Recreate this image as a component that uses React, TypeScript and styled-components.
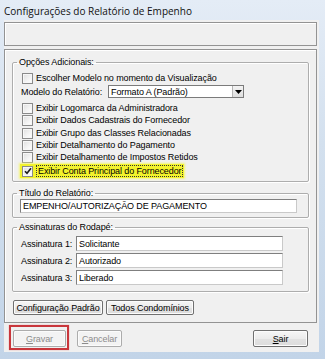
import * as React from 'react'
import styled, { createGlobalStyle } from 'styled-components'

// Global page reset
const GlobalStyle = createGlobalStyle`
  html, body {
    margin: 0;
    padding: 0;
  }
  body {
    width: 325px;
    height: 359px;
    overflow: hidden;
    background: #cfdcec;
  }
`

const Window = styled.div`
  width: 325px;
  height: 359px;
  box-sizing: border-box;
  display: flex;
  flex-direction: column;
  padding: 0 6px 7px 4px;
  background: linear-gradient(to bottom, #e4ecf6 0%, #d3e0ee 40%, #c2d4e8 100%);
  font-family: "Liberation Sans", Arial, sans-serif;
  font-size: 9px;
  letter-spacing: -0.1px;
  color: #000;
`

const TitleBar = styled.div`
  height: 20px;
  display: flex;
  align-items: center;
  padding-top: 1px;
  box-sizing: border-box;
  font-family: "Open Sans", "Liberation Sans", sans-serif;
  font-size: 10px;
  letter-spacing: 0;
  color: #111;
`

const Client = styled.div`
  flex: 1;
  display: flex;
  flex-direction: column;
  padding: 2px 2px 0 0;
  background: #f0f0f0;
`

const Panel = styled.div<{ $height: number; $top: number }>`
  height: ${p => p.$height}px;
  margin-top: ${p => p.$top}px;
  box-sizing: border-box;
  border: 1px solid #939393;
  box-shadow: inset 1px 1px 0 #fff;
  display: flex;
  flex-direction: column;
`

const MainPanel = styled(Panel)`
  padding: 6px 7px 0;
`

// group box (fieldset with legend)
const Group = styled.fieldset<{ $top: number; $pad: string }>`
  margin: ${p => p.$top}px 0 0;
  padding: ${p => p.$pad};
  min-width: 0;
  border: 1px solid #adadad;
  border-radius: 2px;
  box-shadow: inset 1px 1px 0 #fff, 1px 1px 0 #fff;
  display: flex;
  flex-direction: column;
`

const Legend = styled.legend<{ $shift: number }>`
  margin-left: ${p => p.$shift}px;
  padding: 0 2px;
  line-height: 12px;
  font-size: 9px;
`

const CheckRow = styled.div<{ $top?: number }>`
  display: flex;
  align-items: center;
  height: 12px;
  margin-top: ${p => p.$top || 0}px;
`

const Box = styled.span`
  width: 11px;
  height: 11px;
  box-sizing: border-box;
  flex: none;
  margin-right: 3px;
  border: 1px solid #8a8a8a;
  background: linear-gradient(135deg, #dedede 0%, #f4f4f4 60%, #ffffff 100%);
  box-shadow: inset 0 0 0 1px #f7f7f7;
  display: flex;
  align-items: center;
  justify-content: center;
`

const Highlight = styled.div`
  display: flex;
  align-items: center;
  height: 14px;
  width: 164px;
  box-sizing: border-box;
  margin: 1px 0 0 -2px;
  padding-left: 2px;
  background: #f2f22c;
  box-shadow: 0 0 2px 1px #f5f57c;
`

const FocusText = styled.span`
  border: 1px dotted #333;
  padding: 0 1px;
  line-height: 10px;
`

const SelectRow = styled.div`
  display: flex;
  align-items: center;
  height: 13px;
  margin: 1px 0 0 -1px;
`

const FieldLabel = styled.span<{ $width: number }>`
  width: ${p => p.$width}px;
  flex: none;
`

const Select = styled.div`
  width: 136px;
  height: 13px;
  box-sizing: border-box;
  border: 1px solid #7b7b7b;
  background: #fff;
  display: flex;
  align-items: center;
  padding-left: 2px;
`

const SelectText = styled.span`
  flex: 1;
`

const DropButton = styled.span`
  width: 11px;
  height: 11px;
  box-sizing: border-box;
  border-left: 1px solid #b5b5b5;
  background: linear-gradient(#f4f4f4, #dedede);
  display: flex;
  align-items: center;
  justify-content: center;
`

const TextInput = styled.div<{ $width: number; $height: number }>`
  width: ${p => p.$width}px;
  height: ${p => p.$height}px;
  box-sizing: border-box;
  border: 1px solid #7f7f7f;
  border-right-color: #c9c9c9;
  border-bottom-color: #c9c9c9;
  background: #fff;
  display: flex;
  align-items: center;
  padding-left: 2px;
`

const SignRow = styled.div<{ $top: number }>`
  display: flex;
  align-items: center;
  margin-top: ${p => p.$top}px;
`

const ButtonRow = styled.div<{ $top: number }>`
  display: flex;
  gap: 3px;
  margin-top: ${p => p.$top}px;
  padding-left: 1px;
`

const Button = styled.div<{ $width: number; $height: number; $disabled?: boolean }>`
  width: ${p => p.$width}px;
  height: ${p => p.$height}px;
  box-sizing: border-box;
  border: 1px solid ${p => (p.$disabled ? '#acacac' : '#707070')};
  border-radius: 2px;
  background: ${p =>
    p.$disabled
      ? '#f3f3f3'
      : 'linear-gradient(#f6f6f6 0%, #ececec 50%, #e2e2e2 51%, #dcdcdc 100%)'};
  box-shadow: inset 0 0 0 1px ${p => (p.$disabled ? '#fbfbfb' : '#fcfcfc')};
  color: ${p => (p.$disabled ? '#8c8c8c' : '#000')};
  display: flex;
  align-items: center;
  justify-content: center;
  flex: none;
`

const Footer = styled.div`
  display: flex;
  align-items: flex-start;
  margin-top: 2px;
  padding: 0 9px 0 5px;
`

const Marked = styled.div`
  border: 2px solid #c9363b;
  padding: 3px 1px 1px 2px;
  box-shadow: 0 0 1px #e08080;
`

const FooterButton = styled(Button)<{ $left?: number }>`
  margin-top: 5px;
  margin-left: ${p => (p.$left === undefined ? 0 : p.$left)}px;
`

const SairButton = styled(FooterButton)`
  margin-left: auto;
`

const Check = () => (
  <svg width="8" height="8" viewBox="0 0 8 8">
    <path d="M1 4.2 L3 6.3 L7 1.2" fill="none" stroke="#1b1b1b" strokeWidth="1.6" />
  </svg>
)

const options = [
  { text: 'Exibir Logomarca da Administradora', top: 4 },
  { text: 'Exibir Dados Cadastrais do Fornecedor', top: 0 },
  { text: 'Exibir Grupo das Classes Relacionadas', top: 1 },
  { text: 'Exibir Detalhamento do Pagamento', top: 0 },
  { text: 'Exibir Detalhamento de Impostos Retidos', top: 0 }
]

const signatures = ['Solicitante', 'Autorizado', 'Liberado']

export default function App() {
  return (
    <>
      <GlobalStyle />
      <Window>
        <TitleBar>Configurações do Relatório de Empenho</TitleBar>
        <Client>
          <Panel $height={24} $top={0} />
          <MainPanel $height={274} $top={3}>
            <Group $top={0} $pad="0 0 3px 9px">
              <Legend $shift={-5}>Opções Adicionais:</Legend>
              <CheckRow $top={4}>
                <Box />
                Escolher Modelo no momento da Visualização
              </CheckRow>
              <SelectRow>
                <FieldLabel $width={87}>Modelo do Relatório:</FieldLabel>
                <Select>
                  <SelectText>Formato A (Padrão)</SelectText>
                  <DropButton>
                    <svg width="7" height="4" viewBox="0 0 7 4">
                      <path d="M0 0 H7 L3.5 4 Z" fill="#000" />
                    </svg>
                  </DropButton>
                </Select>
              </SelectRow>
              {options.map(o => (
                <CheckRow key={o.text} $top={o.top}>
                  <Box />
                  {o.text}
                </CheckRow>
              ))}
              <Highlight>
                <Box>
                  <Check />
                </Box>
                <FocusText>Exibir Conta Principal do Fornecedor</FocusText>
              </Highlight>
            </Group>

            <Group $top={5} $pad="0 0 4px 7px">
              <Legend $shift={-3}>Título do Relatório:</Legend>
              <TextInput $width={277} $height={14}>
                EMPENHO/AUTORIZAÇÃO DE PAGAMENTO
              </TextInput>
            </Group>

            <Group $top={3} $pad="0 0 6px 8px">
              <Legend $shift={-4}>Assinaturas do Rodapé:</Legend>
              {signatures.map((s, i) => (
                <SignRow key={s} $top={i === 0 ? 3 : 2}>
                  <FieldLabel $width={55}>Assinatura {i + 1}:</FieldLabel>
                  <TextInput $width={207} $height={15}>
                    {s}
                  </TextInput>
                </SignRow>
              ))}
            </Group>

            <ButtonRow $top={8}>
              <Button $width={90} $height={15}>Configuração Padrão</Button>
              <Button $width={88} $height={15}>Todos Condomínios</Button>
            </ButtonRow>
          </MainPanel>

          <Footer>
            <Marked>
              <Button $width={53} $height={17} $disabled>
                <u>G</u>ravar
              </Button>
            </Marked>
            <FooterButton $width={45} $height={17} $disabled $left={8}>
              <u>C</u>ancelar
            </FooterButton>
            <SairButton $width={55} $height={17}>
              <u>S</u>air
            </SairButton>
          </Footer>
        </Client>
      </Window>
    </>
  )
}
